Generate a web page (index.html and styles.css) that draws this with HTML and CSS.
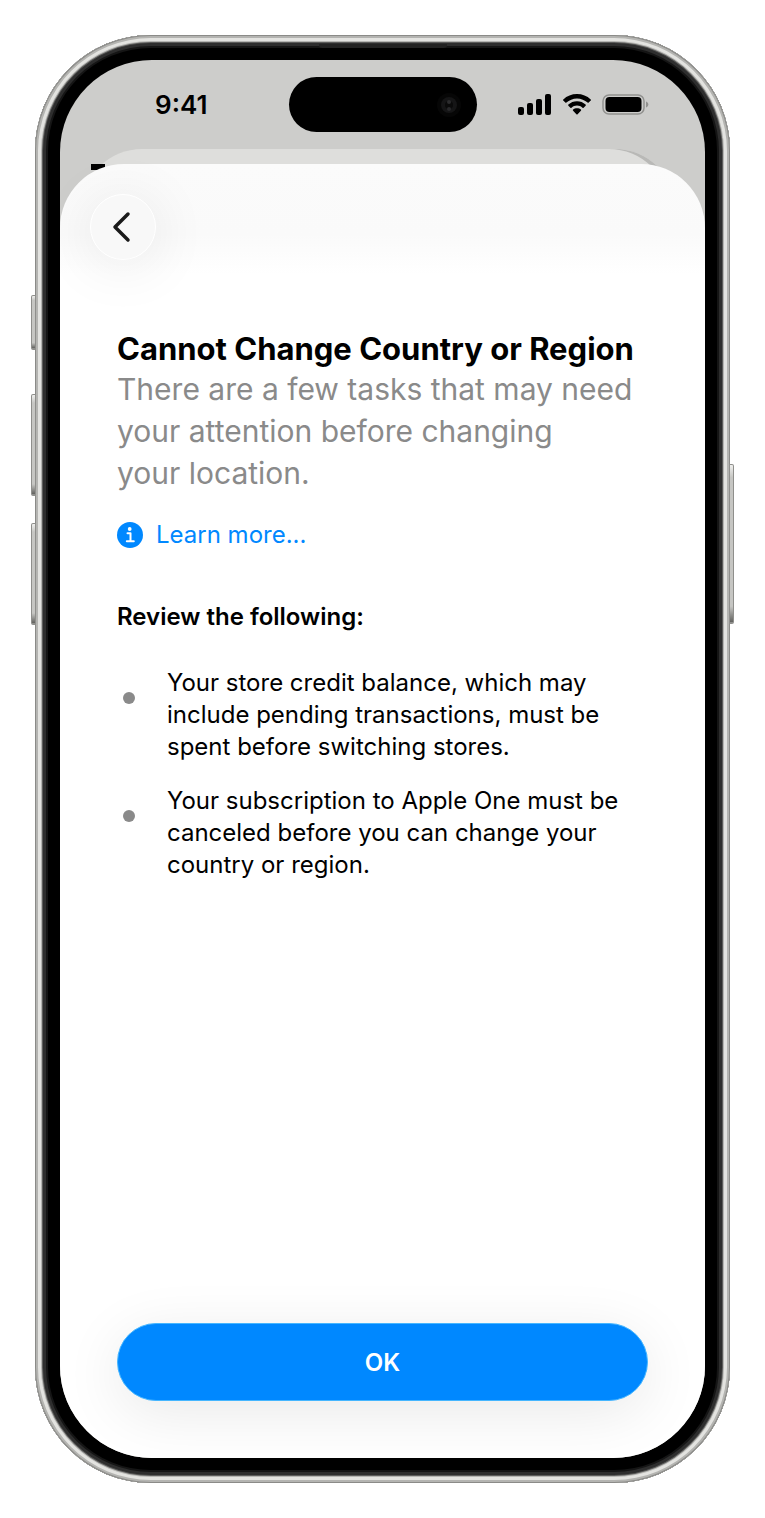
FILE: index.html
```
<!DOCTYPE html>
<html lang="en">
<head>
<meta charset="utf-8">
<meta name="viewport" content="width=device-width, initial-scale=1.0">
<title>Cannot Change Country or Region</title>
<link rel="stylesheet" href="styles.css">
</head>
<body>

<div class="phone">
    <span class="side-key key-action"></span>
    <span class="side-key key-up"></span>
    <span class="side-key key-down"></span>
    <span class="side-key key-power"></span>
    <span class="earpiece"></span>

    <div class="screen">
        <div class="status-bar">
            <span class="time">9:41</span>
            <div class="island">
                <svg width="26" height="26" viewBox="0 0 26 26" aria-hidden="true">
                    <circle cx="13" cy="13" r="12" fill="#060606"/>
                    <circle cx="13" cy="13" r="8" fill="#151516"/>
                    <circle cx="13" cy="13" r="4" fill="#0a0a0a"/>
                    <circle cx="13" cy="10" r="2" fill="#2c2c2e"/>
                    <circle cx="13" cy="17" r="2" fill="#29292b"/>
                </svg>
            </div>
            <div class="indicators">
                <svg width="34" height="22" viewBox="0 0 34 22" aria-hidden="true">
                    <rect x="0" y="13" width="6" height="8" rx="2"/>
                    <rect x="9" y="9" width="6" height="12" rx="2"/>
                    <rect x="18" y="5" width="6" height="16" rx="2"/>
                    <rect x="27" y="0" width="6" height="21" rx="2"/>
                </svg>
                <svg width="28" height="22" viewBox="0 0 28 22" aria-hidden="true">
                    <path d="M14 0C8.700 0 3.900 2 .3 5.400a.8.8 0 0 0 0 1.200l2 2a.8.8 0 0 0 1.100 0C6.200 6 9.900 4.400 14 4.400S21.800 6 24.600 8.600a.8.8 0 0 0 1.100 0l2-2a.8.8 0 0 0 0-1.200C24.100 2 19.300 0 14 0z"/>
                    <path d="M14 7.200c-3.300 0-6.300 1.200-8.600 3.300a.8.8 0 0 0 0 1.200l2 2a.8.8 0 0 0 1.100 0c1.500-1.300 3.400-2.100 5.500-2.100s4 .8 5.500 2.100a.8.8 0 0 0 1.100 0l2-2a.8.8 0 0 0 0-1.200C20.300 8.400 17.300 7.200 14 7.200z"/>
                    <path d="M14 14.200c-1.500 0-2.900.5-3.900 1.400a.8.8 0 0 0 0 1.200l3.300 3.400a.8.8 0 0 0 1.200 0l3.300-3.400a.8.8 0 0 0 0-1.200c-1-.9-2.400-1.400-3.900-1.400z"/>
                </svg>
                <svg width="48" height="22" viewBox="0 0 48 22" aria-hidden="true">
                    <rect x="1" y="1" width="41" height="19" rx="6" fill="none" stroke="#91918f" stroke-width="1.500"/>
                    <rect x="3.500" y="3" width="36" height="15" rx="4"/>
                    <path d="M44 7.500c1.500.5 2.300 1.600 2.300 3s-.8 2.500-2.300 3z" fill="#91918f"/>
                </svg>
            </div>
        </div>

        <div class="back-sheet"></div>

        <main class="sheet">
            <button class="back" type="button" aria-label="Back">
                <svg width="20" height="32" viewBox="0 0 20 32" aria-hidden="true">
                    <path d="M17 3L4 16l13 13" fill="none" stroke="#1a1a1a" stroke-width="3.500" stroke-linecap="round" stroke-linejoin="round"/>
                </svg>
            </button>

            <div class="content">
                <h1>Cannot Change Country or Region</h1>
                <p class="lead">There are a few tasks that may need your attention before changing your&nbsp;location.</p>
                <a class="learn" href="#">
                    <svg width="26" height="26" viewBox="0 0 26 26" aria-hidden="true">
                        <circle cx="13" cy="13" r="13" fill="#0088ff"/>
                        <circle cx="12.700" cy="7" r="1.900" fill="#fff"/>
                        <path d="M10.500 11.200h3v8M9.800 19.300h7" fill="none" stroke="#fff" stroke-width="2" stroke-linecap="round" stroke-linejoin="round"/>
                    </svg>
                    Learn more...
                </a>
                <h2>Review the following:</h2>
                <ul class="tasks">
                    <li>Your store credit balance, which may include pending transactions, must be spent before switching stores.</li>
                    <li>Your subscription to Apple One must be canceled before you can change your country or region.</li>
                </ul>
            </div>

            <button class="ok" type="button">OK</button>
        </main>
    </div>
</div>

</body>
</html>
```
FILE: styles.css
```
* {
    box-sizing: border-box;
}
body {
    margin: 0;
    padding: 35px;
    min-height: 100vh;
    display: flex;
    background-color: white;
    font-family: Inter, "Liberation Sans", sans-serif;
    font-size: 24px;
    color: black;
}
h1, h2, p, ul {
    margin: 0;
    padding: 0;
}
button {
    border: none;
    font-family: inherit;
    padding: 0;
}
svg {
    display: block;
    flex: none;
}

/* phone body */
.phone {
    position: relative;
    flex: 1;
    display: flex;
    padding: 25px;
    border-radius: 116px;
    background-color: black;
    box-shadow:
        inset 0 0 0 1px #8b8b88,
        inset 0 0 0 3px #b4b4b1,
        inset 0 0 0 6px #e3e3e0,
        inset 0 0 0 7px #b5b5b2,
        inset 0 0 0 8px #5c5c5b,
        inset 0 0 0 11px #2e2e2e,
        inset 0 0 0 13px #151515;
}
.side-key {
    position: absolute;
    left: -4px;
    width: 5px;
    height: 102px;
    border: 1px solid #8f8f8c;
    border-bottom-width: 2px;
    border-radius: 2px 0 0 2px;
    background: linear-gradient(#f0f0ee, #c6c6c3 8%, #c6c6c3 90%, #62625f);
}
.key-action {
    top: 260px;
    height: 55px;
}
.key-up {
    top: 359px;
}
.key-down {
    top: 488px;
}
.key-power {
    top: 429px;
    left: auto;
    right: -4px;
    height: 160px;
    border-radius: 0 2px 2px 0;
}
.earpiece {
    position: absolute;
    top: 9px;
    left: 50%;
    width: 128px;
    height: 4px;
    margin-left: -64px;
    border-radius: 0 0 3px 3px;
    background-color: #222;
}
.screen {
    flex: 1;
    display: flex;
    flex-direction: column;
    overflow: hidden;
    border-radius: 92px;
    background-color: #cdcdcb;
}

/* status bar */
.status-bar {
    display: grid;
    grid-template-columns: 1fr 188px 1fr;
    align-items: center;
    height: 89px;
}
.time {
    justify-self: center;
    padding-left: 14px;
    font-size: 26px;
    font-weight: 600;
}
.island {
    display: flex;
    align-items: center;
    justify-content: flex-end;
    height: 55px;
    padding-right: 15px;
    border-radius: 28px;
    background-color: black;
}
.indicators {
    display: flex;
    gap: 11px;
    padding-left: 41px;
}

/* sheets */
.back-sheet {
    position: relative;
    height: 60px;
    margin: 0 30px -45px 22px;
    border-radius: 60px 60px 0 0;
    background-color: #dededc;
    box-shadow: inset -6px 0 0 #b9b9b7;
}
.back-sheet:before {
    content: "";
    position: absolute;
    top: 15px;
    left: 9px;
    width: 14px;
    height: 6px;
    background-color: black;
}
.sheet {
    position: relative;
    flex: 1;
    display: flex;
    flex-direction: column;
    padding: 30px 30px 57px;
    border-radius: 64px 64px 0 0;
    background: linear-gradient(#fbfbfb, #fafafa 70px, white 110px);
}
.back {
    display: flex;
    align-items: center;
    justify-content: center;
    width: 66px;
    height: 66px;
    padding-right: 5px;
    border: 1px solid white;
    border-radius: 50%;
    background-color: #f8f8f8;
    box-shadow: 0 6px 60px rgba(0, 0, 0, 0.09);
}
.content {
    flex: 1;
    padding: 69px 27px 0;
}
h1 {
    font-size: 31px;
    font-weight: 700;
    line-height: 39px;
}
.lead {
    font-size: 30px;
    line-height: 42px;
    color: #8a8a8a;
}
.learn {
    display: flex;
    align-items: center;
    gap: 13px;
    margin-top: 25px;
    line-height: 32px;
    color: #0088ff;
    text-decoration: none;
}
h2 {
    margin-top: 50px;
    font-size: 24px;
    font-weight: 600;
    line-height: 32px;
}
.tasks {
    display: flex;
    flex-direction: column;
    gap: 22px;
    margin-top: 34px;
    list-style: none;
    line-height: 32px;
}
.tasks li {
    display: flex;
    gap: 32px;
    padding-left: 6px;
}
.tasks li:before {
    content: "";
    flex: none;
    width: 12px;
    height: 12px;
    margin-top: 25px;
    border-radius: 50%;
    background-color: #8a8a8a;
}
.ok {
    height: 78px;
    margin: 0 27px;
    border: 1px solid #45b6ff;
    border-radius: 39px;
    background-color: #0088ff;
    box-shadow: 0 12px 60px rgba(0, 0, 0, 0.09);
    font-size: 24px;
    font-weight: 600;
    color: white;
}
```
